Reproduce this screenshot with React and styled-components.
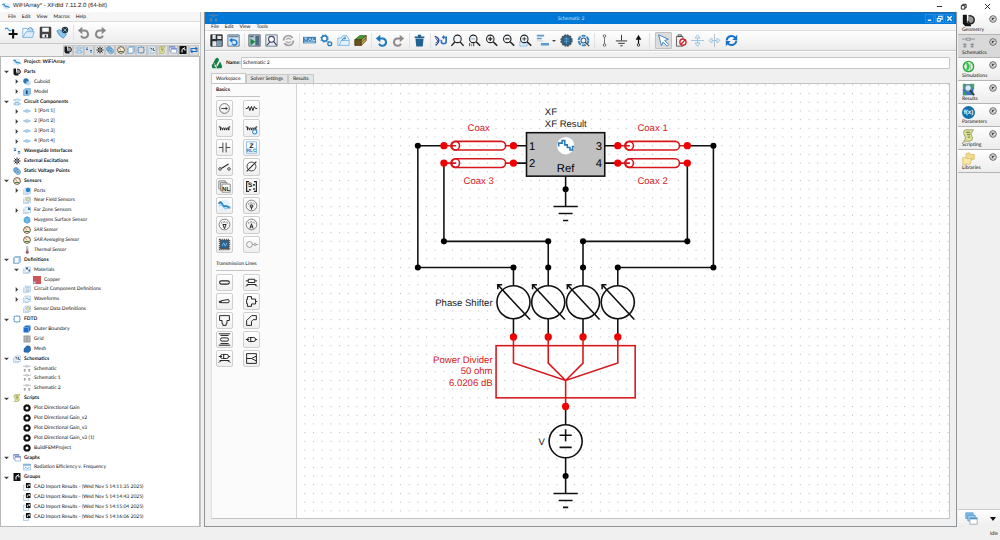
import React, { useState } from 'react';
import styled, { createGlobalStyle } from 'styled-components';

const GlobalStyle = createGlobalStyle`
  * {
    box-sizing: border-box;
  }
  body {
    margin: 0;
    background: #f0f0f0;
    color: #111;
    font-family: Lato, 'Liberation Sans', sans-serif;
    font-size: 5px;
    line-height: 8px;
    text-rendering: geometricPrecision;
  }
  button,
  input {
    font: inherit;
    color: inherit;
    text-rendering: inherit;
  }
`;

/* ---------- icons ---------- */

const blue = '#1b6fb5';
const sky = '#8fc1e8';
const dark = '#222';

const lens = (
  <g stroke={dark}>
    <circle cx="6.5" cy="6" r="4.6" fill="#eef5fa" strokeWidth="1.3" />
    <path d="M10 9.5l5 5" strokeWidth="2" />
  </g>
);

const page = (
  <path d="M4 2h11v11H4zM1 5v10h11" stroke="#8ab6da" fill="#eaf4fc" />
);

const gauge = (
  <g>
    <circle cx="8" cy="8" r="6.8" fill="#fff3d8" stroke="#4a3b25" strokeWidth="1.6" />
    <path d="M8 9L5 4.5" stroke="#b33" strokeWidth="1.3" />
    <path d="M4 11h8" stroke="#3d7a3a" strokeWidth="2" />
    <path d="M8 3v1M12 5l-1 1" stroke="#444" />
  </g>
);

const meter = (
  <g stroke="#666">
    <circle cx="8" cy="8" r="6.6" />
    <path d="M4 6.5Q8 3 12 6.5" strokeDasharray="1 1" strokeWidth="1.6" />
  </g>
);

const coil = 'M1 6h2v4q1.300-6 2.600 0q1.300-6 2.600 0q1.300-6 2.600 0q1.300-6 2.600 0V6H15';

const icons = {
  app: (
    <g>
      <circle cx="8" cy="8" r="7" fill="#e4f1fb" stroke="none" />
      <path d="M1 6q2-4 4 0t3 3 3 0 4 2" stroke="#2a86c8" strokeWidth="2.4" />
      <path d="M1 9q3-4 5 0t4 3 5-1" stroke="#7ab8e2" />
    </g>
  ),
  add: (
    <g>
      <path d="M0 4q2-3 4 0t4 1" stroke="#4a9bd4" strokeWidth="1.5" />
      <path d="M10 4v11.5M4.5 9.8h11" stroke="#111" strokeWidth="2.6" />
    </g>
  ),
  open: (
    <g stroke="#6aa9d8">
      <path d="M1 14V3h5l1 2h6v3" fill="#f4faff" />
      <path d="M1 14L5 7h10l-2 7z" fill="#dceefa" />
      <path d="M7 4q4-4 7 1" stroke={blue} />
    </g>
  ),
  save: (
    <g>
      <path d="M1.5 1.5h13v13h-13z" fill="#444" stroke="#222" />
      <path d="M4 2h8v5H4zM4 10h7v4H4z" fill="#fff" stroke="none" />
      <path d="M7 11h2v3H7z" fill="#333" stroke="none" />
    </g>
  ),
  wifi: (
    <g>
      <path d="M1 6q3-3 6 0t6 4l-4 5q-6-3-8-9z" fill="#8cc4ea" stroke="#4b95cd" />
      <circle cx="11" cy="5" r="4" fill="#23364a" stroke="none" />
      <path d="M9 3l4 4M13 3L9 7" stroke="#9cc" />
    </g>
  ),
  undo: (
    <g>
      <path d="M4.5 5.5H9a4.5 4.5 0 1 1-4 6.5" stroke="currentColor" strokeWidth="2.4" />
      <path d="M6.5 1v9L1 5.5z" fill="currentColor" stroke="none" />
    </g>
  ),
  redo: (
    <g>
      <path d="M11.5 5.5H7a4.5 4.5 0 1 0 4 6.5" stroke="currentColor" strokeWidth="2.4" />
      <path d="M9.5 1v9L15 5.5z" fill="currentColor" stroke="none" />
    </g>
  ),
  parts: (
    <g>
      <path d="M1 1h5v9l5 3v2H4l-3-3z" fill="#151515" stroke="none" />
      <path d="M8 2q7 0 7 5t-5 5l-3-3" fill="#999" stroke="#222" strokeWidth="1.8" />
    </g>
  ),
  circuit: (
    <g stroke="#7db5e0" strokeWidth="1.5">
      <rect x="4" y="2" width="8" height="4" rx="2" />
      <rect x="4" y="9" width="8" height="5" fill="#cfe5f6" />
      <path d="M0 4h4M12 4h4M0 12h4M12 12h4" />
    </g>
  ),
  port: (
    <g stroke="#6fa6d2">
      <rect x="4" y="5.5" width="8" height="5" rx="2" fill="#b9d7ee" />
      <path d="M0 8h4M12 8h4" strokeWidth="1.5" />
    </g>
  ),
  waveguide: (
    <g>
      <path d="M1 1h6v7H1zM9 8h6v7H9z" fill="#cfe4f4" stroke="none" />
      <path d="M4 2v6M2 6l2 2 2-2M12 8v6M10 10l2-2 2 2" stroke="#245e94" strokeWidth="1.5" />
    </g>
  ),
  excite: (
    <g stroke="#222" strokeWidth="2">
      <path d="M8 1v14M1 8h14M3 3l10 10M13 3L3 13" />
      <circle cx="8" cy="8" r="2" fill="#fff" strokeWidth="1" />
    </g>
  ),
  voltage: (
    <g stroke="#2a6eaa">
      <circle cx="6" cy="6" r="5" fill="#78b4df" />
      <circle cx="10" cy="10" r="5" fill="#9fcbea" />
      <path d="M7 8l6 4M8 12l4-5" />
    </g>
  ),
  gauge,
  sphere: (
    <g>
      {page}
      <circle cx="10" cy="6" r="4.5" fill="#2c82c4" stroke="none" />
      <path d="M5 9q5 4 10 0v4H5z" fill="#bcdcf3" stroke="none" />
    </g>
  ),
  near: (
    <g>
      {page}
      <circle cx="10" cy="7" r="3.5" fill="#efe0b0" stroke="#886" />
    </g>
  ),
  far: (
    <g>
      {page}
      <path d="M10 2a6 6 0 0 1 5 6h-5z" fill="#2c72b4" stroke="none" />
    </g>
  ),
  huygens: (
    <g>
      <path d="M8 1l6 3.5v7L8 15l-6-3.5v-7z" fill="#58aee0" stroke="#358cc4" />
      <path d="M2 5l6 3 6-3M8 8v7" stroke="#a8d8f4" />
    </g>
  ),
  thermal: (
    <g>
      <path d="M7 1h3v9H7z" fill="#dfe8f2" stroke="#89a" />
      <circle cx="8.5" cy="12.5" r="2.6" fill="#c44" stroke="#668" />
      <path d="M8.5 5v6" stroke="#b33" />
    </g>
  ),
  definitions: (
    <g>
      <path d="M4 1h11v11l-3 3H1V4z" fill="#a5c6e2" stroke="#6e93b3" />
      <path d="M4 4h7v9H4z" fill="#f4faff" stroke="none" />
    </g>
  ),
  materials: (
    <g>
      {page}
      <path d="M6 3h4v4H6zM11 7h3v4h-3z" fill="#3f5f80" stroke="none" />
    </g>
  ),
  copper: (
    <g>
      <path d="M0 0h16v16H0z" fill="#cd5557" stroke="none" />
      <circle cx="3" cy="13" r="2.5" fill="#b9c8e8" stroke="none" />
    </g>
  ),
  list: (
    <g>
      {page}
      <path d="M6 5h7M6 8h7M6 11h7" stroke="#7d9ab5" />
    </g>
  ),
  wave: (
    <g>
      {page}
      <path d="M6 8q2-5 4 0t4-1" stroke={blue} />
    </g>
  ),
  fdtd: (
    <path
      d="M5.5 2.5h-3v3M10.5 2.5h3v3M5.5 13.5h-3v-3M10.5 13.5h3v-3M8 0v4M8 12v4M0 8h4M12 8h4"
      stroke="#1f74b8"
      strokeWidth="1.6"
    />
  ),
  cube: (
    <g>
      <path d="M1 5l4-4h10v9l-4 5H1z" fill="#1e6fd0" stroke="none" />
      <path d="M1 5h10l4-4M11 5v10" stroke="#9ccaf6" />
    </g>
  ),
  grid: (
    <g>
      <path d="M1 1h14v14H1z" fill="#999" stroke="none" />
      <path d="M1 4.5h14M1 8h14M1 11.5h14M5 1v14M11 1v14" stroke="#c6c6c6" />
    </g>
  ),
  mesh: <path d="M2 14V8l5-6q8-2 8 4v5l-4 4z" fill="#2b70b4" stroke="#174f88" />,
  model: (
    <g>
      <path d="M1 4l4-3h10v11l-4 3H1z" fill="#86bfe8" stroke="#5b9bcb" />
      <path d="M6 5h3v7H6z" fill="#143e66" stroke="none" />
    </g>
  ),
  cuboid: (
    <g stroke="none">
      <circle cx="6" cy="6" r="5.5" fill="#2878b8" />
      <path d="M7 7h8v5l-3 3H7z" fill="#bcd9ee" />
    </g>
  ),
  schematics: (
    <g>
      {page}
      <path d="M5 5h3v4M11 4v5h3" stroke="#345" strokeWidth="1.5" />
    </g>
  ),
  schematic: (
    <g stroke="#858b90">
      <path d="M0 2.5h5M11 2.5h5M5.5 1.5h5V4h-5z" />
      <path d="M3.5 8v5M12.5 8v5M1.5 9h4M10.5 9h4M1.5 12h4M10.5 12h4" strokeWidth="1.4" />
    </g>
  ),
  script: (
    <g>
      <path d="M4 1h10l-3 5 2 5q0 4-4 4H2q3-2 2-5l-2-5q0-4 2-4z" fill="#dfe29a" stroke="#96984f" />
      <path d="M5 4h5M6 7h4M7 10h3" stroke="#55582c" />
    </g>
  ),
  gear: (
    <g>
      <circle cx="8" cy="8" r="5" stroke="#111" strokeWidth="4" />
      <circle cx="8" cy="8" r="7.2" stroke="#111" strokeDasharray="2 1.5" />
    </g>
  ),
  graphs: (
    <g stroke="#5a78c0">
      <path d="M1 1h11v9H1z" fill="#eaf0fb" />
      <path d="M4 5h11v9H4z" fill="#fff" />
      <path d="M1 2h11M4 6h11" strokeWidth="2.4" />
    </g>
  ),
  graph: (
    <g>
      <path d="M1 2h14v12H1z" fill="#f4faff" stroke="#6aa2d0" />
      <path d="M1 4h14" stroke="#3f8acb" strokeWidth="2" />
      <path d="M3 11q2-5 4-1t6-2" stroke={blue} />
    </g>
  ),
  groups: (
    <g>
      <path d="M1 0h14v16H1z" fill="#111" stroke="none" />
      <path d="M6 13V7l6-4M9 6h3v3" stroke="#fff" strokeWidth="2" />
    </g>
  ),
  group: (
    <g>
      <path d="M1 4v11h10V5z" fill="#eef5fb" stroke="#7ea9ce" />
      <path d="M6 0h9v10H6z" fill="#111" stroke="none" />
      <path d="M9 8V5l4-2v3" stroke="#fff" strokeWidth="1.5" />
    </g>
  ),
  refresh: (
    <g>
      <path d="M2 8a6 6 0 0 1 10.5-3.5M14 8a6 6 0 0 1-10.5 3.5" stroke="currentColor" strokeWidth="2.4" />
      <path d="M15 1v6.5H9zM1 15V8.5h6z" fill="currentColor" stroke="none" />
    </g>
  ),
  swap: (
    <g>
      <path d="M2 9V5h10M14 7v4H4" stroke="currentColor" strokeWidth="2.2" />
      <path d="M11 1l5 4-5 4zM5 7l-5 4 5 4z" fill="currentColor" stroke="none" />
    </g>
  ),
  saveAll: (
    <g>
      <path d="M1 1h14v14H1z" fill="#2c3033" stroke="#222" />
      <path d="M3 1h4v5H3zM9 2h5v4H9zM3 9h5v6H3z" fill="#dfe8ee" stroke="none" />
      <path d="M8.5 8h6v7h-6z" fill="#7b9db8" stroke="none" />
    </g>
  ),
  revert: (
    <g>
      <path d="M1 1h14v14H1z" fill="#d3e4f2" stroke="#536b80" />
      <path d="M2 2h12v2H2z" fill="#6d879a" stroke="none" />
      <path d="M6 7.5h3a3 3 0 1 1-2.5 4.500" stroke="#1978cf" strokeWidth="1.8" />
      <path d="M6.5 4.5v6.500L2.5 7.500z" fill="#1978cf" stroke="none" />
    </g>
  ),
  run: (
    <g>
      <path d="M1 1h14v14H1z" fill="#b7cddd" stroke="#556" />
      <path d="M2 2h5v2H2zM9 2h5v12H9z" fill="#4c6c83" stroke="none" />
      <path d="M3 5.5l6 4-6 4.500z" fill="#1d8a3c" stroke="none" />
    </g>
  ),
  preview: (
    <g>
      <path d="M1 1h14v14H1z" fill="#e6eef5" stroke="#5f6f7c" />
      <circle cx="8" cy="6.5" r="3.6" fill="#fff" stroke="#446" strokeWidth="1.3" />
      <path d="M10.5 9l4 5M6 10l-4 4" stroke="#446" strokeWidth="1.5" />
    </g>
  ),
  sync: (
    <g stroke="#a3a3a3">
      <circle cx="8" cy="8" r="6" strokeWidth="2.4" strokeDasharray="15 3.5" />
      <path d="M5 7q3-3 6 0M11 9q-3 3-6 0" strokeWidth="1.5" />
    </g>
  ),
  table: (
    <g>
      <path d="M0 3.5h16v8H0z" fill="#3d83b9" stroke="none" />
      <path d="M1.5 5h3l-2 3M6.5 8.5l2-3 2 3M12 5v3h3M1.5 10h13" stroke="#d9edfb" />
    </g>
  ),
  gears: (
    <g stroke="#1b74bd">
      <circle cx="5.5" cy="5.5" r="3.4" strokeWidth="1.7" />
      <circle cx="5.5" cy="5.5" r="4.8" strokeDasharray="1.5 2.3" />
      <circle cx="12" cy="12" r="2.4" strokeWidth="1.5" />
      <path d="M9 9l2 1" />
    </g>
  ),
  openCircuit: (
    <g stroke="#6fb0de">
      <path d="M1 14V5h4l2-3h5l3 5v7z" fill="#e4f2fc" />
      <path d="M3 14L5 8h10" />
      <path d="M6 8q2-5 5-2M10 3v3H7" stroke="#2b80c0" />
    </g>
  ),
  library: (
    <g>
      <path d="M1 7l6-5h8l-6 5z" fill="#4a9a32" stroke="#2f5f22" />
      <path d="M1 7h8v7H1z" fill="#75501f" stroke="#4b3213" />
      <path d="M9 7l6-5v6l-6 6z" fill="#cfa052" stroke="#5b3d18" />
      <path d="M1 10h8l6-5" stroke="#2f6f22" />
    </g>
  ),
  trash: (
    <g stroke="none" fill="#1f6190">
      <path d="M2 3h12v2H2zM6 1h4v2H6zM3 5.5h10l-1 10H4z" />
    </g>
  ),
  rotate: (
    <g stroke="#223c88" strokeWidth="1.6">
      <path d="M1 3q5 2 5 5t-4 6" />
      <path d="M2 5l3 4-3 2" strokeWidth="1" />
      <path d="M9 7v2a3 3 0 0 0 6 0V4h-3" stroke="#2f72c5" strokeWidth="2" />
      <path d="M12.5 1v6L9.500 4z" fill="#2f72c5" stroke="none" />
    </g>
  ),
  zoom: (
    <g>
      <circle cx="8" cy="6" r="4.6" fill="#eef5fa" stroke={dark} strokeWidth="1.3" />
      <path d="M5 9.5l-4.500 5M11 9.5l4.500 5" stroke={dark} strokeWidth="1.6" />
    </g>
  ),
  zoomFit: (
    <g>
      {lens}
      <path d="M2 11v4M4.5 12v1M4.5 14v1M7 11v4" stroke={dark} />
      <path d="M4 6h5" stroke="#89a" />
    </g>
  ),
  zoomIn: (
    <g>
      {lens}
      <path d="M4 6h5M6.5 3.5v5" stroke={dark} strokeWidth="1.4" />
    </g>
  ),
  zoomOut: (
    <g>
      {lens}
      <path d="M4 6h5" stroke={dark} strokeWidth="1.4" />
    </g>
  ),
  zoomArea: (
    <g>
      <path d="M1 9h9v6H1z" fill="#d7e9f7" stroke={sky} />
      {lens}
      <path d="M4 6h5M6.5 3.5v5" stroke={dark} />
    </g>
  ),
  align: (
    <g stroke="none" fill="#5b9bd0">
      <path d="M1 1h9v2H1zM1 4.5h6v2H1zM6 11h10v3H6z" />
      <path d="M1 8h8v1H1z" fill="#b9cfe0" />
    </g>
  ),
  chip: (
    <g>
      <circle cx="8" cy="8" r="6.4" fill="#2a6390" stroke="#4d5358" strokeWidth="2.4" strokeDasharray="2.5 .8" />
      <path d="M5 6h6M5 9h6M8 4v8" stroke="#5fa3d2" />
    </g>
  ),
  gearSearch: (
    <g>
      <circle cx="8" cy="8" r="6" stroke="#3a83bf" strokeWidth="2.4" strokeDasharray="5 1.3" />
      <circle cx="8" cy="8" r="3" stroke="#245f92" strokeWidth="1.3" />
      <path d="M10 10l5 5" stroke="#444" strokeWidth="1.5" />
    </g>
  ),
  wire: (
    <g stroke="#555">
      <circle cx="8" cy="2.5" r="1.6" />
      <circle cx="8" cy="13.5" r="1.6" />
      <path d="M8 4v8" />
    </g>
  ),
  ground: <path d="M8 1v7M1 8.5h14M4 11.5h8M6.5 14.5h3" stroke="#333" strokeWidth="1.2" />,
  probe: (
    <g>
      <path d="M8 1l3.5 6h-7z" fill="#111" stroke="none" />
      <path d="M8 6v8" stroke="#111" strokeWidth="1.5" />
      <circle cx="8" cy="13.5" r="1.5" fill="#fff" stroke="#111" />
    </g>
  ),
  cursor: (
    <path d="M2 1l12 5.5L9.5 8l5 5-2 2-5-5-2 4.500z" fill="#fff" stroke="#3a86cc" strokeWidth="1.2" />
  ),
  disable: (
    <g>
      <path d="M3 3h8v12H3zM5 1h4v2H5z" fill="#eee" stroke="#444" />
      <circle cx="11" cy="10" r="3.8" stroke="#cf2c34" fill="#fff" strokeWidth="1.7" />
      <path d="M13.5 7.5l-5 5" stroke="#cf2c34" strokeWidth="1.7" />
    </g>
  ),
  flipV: (
    <g stroke="#8cbde2">
      <path d="M0 8h16" />
      <path d="M5 5l3-4 3 4zM5 11l3 4 3-4zM8 5v6" />
    </g>
  ),
  flipH: (
    <g stroke="#8cbde2">
      <path d="M8 0v16" stroke="#a4b4c0" />
      <path d="M5 5L1 8l4 3zM11 5l4 3-4 3zM5 8h6" />
    </g>
  ),
  check: (
    <g>
      <path d="M2 15Q0 13 3 8q3-7 5-7t5 7q3 5 1 7z" fill="#178248" stroke="none" />
      <path d="M4 9l3 4 5-9" stroke="#fff" strokeWidth="2" />
      <path d="M1 11q6-3 8 4" stroke="#0c5530" />
    </g>
  ),
  simulation: (
    <g>
      <circle cx="8" cy="8" r="6.3" fill="#d9f6d9" stroke="#35a846" strokeWidth="1.8" />
      <path d="M4 3q4 5 0 10h3q5-5 0-10z" fill="#35c64c" stroke="none" />
      <path d="M10.5 4v8" stroke="#bbb" strokeWidth="1.5" />
    </g>
  ),
  results: (
    <g>
      <path d="M1 1h4v6H1zM10 1h5v7h-5z" fill="#4aa56a" stroke="none" />
      <path d="M1 7h13v8H1z" fill="#3b73c0" stroke="none" />
      <path d="M2 9l4 6H1z" fill="#36a253" stroke="none" />
      <circle cx="7.5" cy="6" r="4" fill="#d6eafa" stroke="#567f9d" strokeWidth="1.5" />
      <path d="M10 9l5 6" stroke="#333" strokeWidth="2" />
    </g>
  ),
  folders: (
    <g fill="#f5dc8c" stroke="#d8bb66">
      <path d="M5 2l4-1 1 2h5v6H5z" />
      <path d="M1 7h4l1 1h6l-2 7H1z" fill="#fae8a8" />
    </g>
  ),
  windows: (
    <g stroke="#5a9ccc">
      <path d="M1 1h9v7H1z" fill="#7fbbe5" />
      <path d="M3.5 4h9v7h-9z" fill="#9dccec" />
      <path d="M6 7h9v8H6z" fill="#fff" stroke="#8fa6b8" />
      <path d="M6 8h9" stroke="#4993cb" strokeWidth="2" />
    </g>
  ),

  // palette: basics
  source: (
    <g stroke="#555">
      <circle cx="8" cy="8" r="6" />
      <path d="M4 8h8M10 6v4" stroke="#222" />
    </g>
  ),
  resistor: <path d="M1 8h2l1.3-2.5 1.8 5 1.8-5 1.8 5 1.8-5L13 8h2" stroke="#222" strokeWidth="1.2" />,
  inductor: <path d={coil} stroke="#222" strokeWidth="1.2" />,
  mutual: (
    <g>
      <path d={coil} stroke="#222" strokeWidth="1.2" />
      <circle cx="12" cy="12" r="2.6" fill="#fff" stroke="#3b8fd0" strokeWidth="1.3" />
    </g>
  ),
  capacitor: <path d="M1 8h5M10 8h5M6 2v12M10 2v12" stroke="#444" strokeWidth="1.2" />,
  rlc: (
    <g>
      <rect x="2" y="1" width="12" height="14" fill="#f3f9fe" stroke="#7db4de" />
      <text x="8" y="8" textAnchor="middle" fontSize="8" fill="#111">Z</text>
      <text x="8" y="14" textAnchor="middle" fontSize="6" fill="#2379bd">RLC</text>
    </g>
  ),
  netlist: (
    <g stroke="#777">
      <path d="M1 1h8v10H1z" fill="#eee" />
      <path d="M3 3h8v10H3z" fill="#eee" />
      <path d="M5 5h10v10H5z" fill="#fff" />
      <text x="10" y="13" textAnchor="middle" fontSize="7" fill="#111" stroke="none">NL</text>
    </g>
  ),
  sparam: (
    <g>
      <path d="M5 2H2v12h3M11 2h3v12h-3" stroke="#222" strokeWidth="1.4" />
      <text x="6.5" y="9" textAnchor="middle" fontSize="8" fill="#111">S</text>
      <path d="M10 5h2v2h-2zM10 10h2v2h-2zM5 11h2v2H5z" fill="#222" stroke="none" />
    </g>
  ),
  switch: (
    <g stroke="#222">
      <circle cx="2.5" cy="11" r="1.6" />
      <circle cx="13.5" cy="11" r="1.6" />
      <path d="M4 10.5L13 5" strokeWidth="1.3" />
    </g>
  ),
  phase: (
    <g stroke="#222">
      <circle cx="8" cy="8" r="5.5" />
      <path d="M2 14L14 2" strokeWidth="1.3" />
    </g>
  ),
  chipBlue: (
    <g>
      <path d="M2 2h12v12H2z" stroke="#555" strokeWidth="2" strokeDasharray="1.5 1" />
      <path d="M3 3h10v10H3z" fill="#1f659b" stroke="#444" />
      <path d="M5 10l2-4 2 4 2-4" stroke="#8dc6ee" />
    </g>
  ),
  meterV: (
    <g>
      {meter}
      <path d="M6 8l2 5 2-5z" stroke="#222" strokeWidth="1.2" />
    </g>
  ),
  meterA: (
    <g>
      {meter}
      <path d="M6 13l2-6 2 6M7 11h2" stroke="#222" strokeWidth="1.2" />
    </g>
  ),
  meterP: (
    <g>
      {meter}
      <path d="M8 13v-3M6.5 7.5h3V10h-3z" stroke="#222" strokeWidth="1.2" />
    </g>
  ),
  node: (
    <g stroke="#888">
      <circle cx="5.5" cy="8" r="3.6" />
      <circle cx="12.5" cy="8" r="1.3" />
      <path d="M9 8h2M14 8h2" />
    </g>
  ),

  // palette: transmission lines
  line: <rect x="2" y="6" width="12" height="4" rx="2" stroke="#222" strokeWidth="1.3" />,
  microstrip: (
    <path d="M4 4h8v4H4zM1 6h3M12 6h3M2 10.5h12M1 13q1-2 3-2M15 13q-1-2-3-2" stroke="#222" strokeWidth="1.2" />
  ),
  taper: (
    <g stroke="#222" strokeWidth="1.200">
      <path d="M4 7l9-1.5q1.5 2 0 4H4z" />
      <circle cx="2.5" cy="8.500" r="1" fill="#222" />
    </g>
  ),
  step: <path d="M3 2h5v3h5v6H8v3H3v-3.500H2v-5h1zM13 8h2" stroke="#222" strokeWidth="1.2" />,
  tee: <path d="M2 2h12v6h-3v4h-1v2H6v-2H5V8H2z" stroke="#222" strokeWidth="1.2" />,
  bend: <path d="M2 14V8l6-6h6v5h-4l-2 2v5z" stroke="#222" strokeWidth="1.2" />,
  stripline: (
    <g stroke="#222" strokeWidth="1.2">
      <path d="M1 1h14M3 3h10M3 13h10M1 15h14" />
      <rect x="3" y="6" width="10" height="4" rx="2" />
    </g>
  ),
  coax: (
    <g stroke="#222" strokeWidth="1.2">
      <rect x="3" y="5.500" width="10" height="5" rx="2.500" />
      <path d="M7 5.500v5M1 8h4M13 8h2" />
    </g>
  ),
  coaxGround: (
    <g stroke="#222" strokeWidth="1.2">
      <rect x="3" y="3" width="10" height="5" rx="2.500" />
      <path d="M7 3v5M1 5.500h4M13 5.500h2M2 10.500h12M1 13q1-2 3-2M15 13q-1-2-3-2" />
    </g>
  ),
  divider: <path d="M2 2h12v12H2zM2 8h6l6-3M8 8l6 3" stroke="#222" strokeWidth="1.2" />,
};

const Svg = styled.svg`
  display: block;
  flex: none;
  width: ${p => p.$size}px;
  height: ${p => p.$size}px;
  color: ${p => p.$color || 'inherit'};
  fill: none;
  text {
    font-family: 'Liberation Sans', sans-serif;
    font-weight: bold;
  }
`;

const Icon = ({ name, size = 13, color }) => (
  <Svg viewBox="0 0 16 16" $size={size} $color={color} aria-hidden="true">
    {icons[name]}
  </Svg>
);

/* ---------- shell ---------- */

const Page = styled.div`
  display: flex;
  flex-direction: column;
  min-height: 100vh;
`;

const TitleBar = styled.header`
  display: flex;
  align-items: center;
  height: 12px;
  padding: 0 2px;
  gap: 3px;
  background: #fff;
`;

const AppTitle = styled.h1`
  flex: 1;
  margin: 0;
  font-family: 'Liberation Sans', sans-serif;
  font-size: 6px;
  font-weight: normal;
`;

const Caption = styled.button`
  display: flex;
  justify-content: center;
  align-items: center;
  width: 21px;
  height: 12px;
  padding: 0;
  border: 0;
  background: none;
`;

const Body = styled.div`
  flex: 1;
  display: flex;
  background: #f0f0f0;
`;

const StatusBar = styled.footer`
  height: 13px;
  padding: 3px 2px 0;
  text-align: right;
`;

/* ---------- shared bars ---------- */

const MenuBar = styled.nav`
  display: flex;
  align-items: center;
  height: ${p => p.$height}px;
  padding-left: ${p => p.$left}px;
  gap: 6px;
  border-bottom: 1px solid #ddd;
  background: #f6f6f6;
`;

const MenuItem = styled.button`
  padding: 0;
  border: 0;
  background: none;
  line-height: 6px;
`;

const ToolBar = styled.div`
  display: flex;
  align-items: center;
  height: ${p => p.$height}px;
  padding-left: ${p => p.$left}px;
  border-bottom: 1px solid #c8c8c8;
  background: linear-gradient(#fff, #ececec);
`;

const Tool = styled.button`
  display: flex;
  align-items: center;
  justify-content: center;
  gap: 3px;
  flex: none;
  width: ${p => p.$width || 17}px;
  height: 17px;
  padding: 0;
  border: 1px solid ${p => (p.$active ? '#c0c0c0' : 'transparent')};
  border-radius: 1px;
  background: ${p => (p.$active ? '#dcdcdc' : 'none')};
`;

const Divider = styled.span`
  flex: none;
  width: 1px;
  height: 15px;
  margin: 0 ${p => p.$space || 1}px 0 2px;
  background: #e2e2e2;
`;

const Caret = styled.span`
  border: 2px solid transparent;
  border-top: 2px solid #444;
  border-bottom: 0;
`;

/* ---------- project tree ---------- */

const Sidebar = styled.aside`
  display: flex;
  flex-direction: column;
  width: 201px;
  border-right: 1px solid #c4c4c4;
`;

const FilterBar = styled.div`
  display: flex;
  justify-content: flex-end;
  align-items: center;
  height: 12px;
  padding-right: 1px;
`;

const Filter = styled.button`
  display: flex;
  justify-content: center;
  align-items: center;
  height: 11px;
  padding: 0;
  border: 1px solid #c6c6c6;
  background: #dedede;
`;

const FilterGroup = styled.div`
  display: grid;
  grid-template-columns: repeat(13, 1fr);
  width: 136px;
`;

const TreeList = styled.ul`
  flex: 1;
  display: flex;
  flex-direction: column;
  margin: 0;
  padding: 0 0 4px;
  list-style: none;
  border: 1px solid #b8b8b8;
  background: #fff;
`;

const TreeRow = styled.li`
  flex: 1;
  display: flex;
  align-items: center;
  padding-left: ${p => 2 + p.$level * 10}px;
  font-weight: ${p => (p.$bold ? 'bold' : 'normal')};
  font-style: ${p => (p.$italic ? 'italic' : 'normal')};
  white-space: nowrap;
`;

const Expander = styled.button`
  display: flex;
  justify-content: center;
  align-items: center;
  width: 6px;
  height: 6px;
  margin-right: 4px;
  padding: 0;
  border: 0;
  background: none;
`;

const Spacer = styled.span`
  width: 10px;
`;

const Label = styled.span`
  margin-left: 3px;
`;

const tree = [
  { level: 0, icon: 'app', text: 'Project: WiFiArray', bold: true },
  { level: 0, icon: 'parts', text: 'Parts', bold: true, open: true },
  { level: 1, icon: 'cuboid', text: 'Cuboid', open: false },
  { level: 1, icon: 'model', text: 'Model', open: false },
  { level: 0, icon: 'circuit', text: 'Circuit Components', bold: true, open: true },
  { level: 1, icon: 'port', text: '1 [Port 1]', open: false },
  { level: 1, icon: 'port', text: '2 [Port 2]', open: false },
  { level: 1, icon: 'port', text: '3 [Port 3]', open: false },
  { level: 1, icon: 'port', text: '4 [Port 4]', open: false },
  { level: 0, icon: 'waveguide', text: 'Waveguide Interfaces', bold: true },
  { level: 0, icon: 'excite', text: 'External Excitations', bold: true },
  { level: 0, icon: 'voltage', text: 'Static Voltage Points', bold: true },
  { level: 0, icon: 'gauge', text: 'Sensors', bold: true, open: true },
  { level: 1, icon: 'sphere', text: 'Ports', open: false },
  { level: 1, icon: 'near', text: 'Near Field Sensors' },
  { level: 1, icon: 'far', text: 'Far Zone Sensors', open: false },
  { level: 1, icon: 'huygens', text: 'Huygens Surface Sensor' },
  { level: 1, icon: 'gauge', text: 'SAR Sensor', italic: true },
  { level: 1, icon: 'gauge', text: 'SAR Averaging Sensor', italic: true },
  { level: 1, icon: 'thermal', text: 'Thermal Sensor', italic: true },
  { level: 0, icon: 'definitions', text: 'Definitions', bold: true, open: true },
  { level: 1, icon: 'materials', text: 'Materials', open: true },
  { level: 2, icon: 'copper', text: 'Copper' },
  { level: 1, icon: 'list', text: 'Circuit Component Definitions', open: false },
  { level: 1, icon: 'wave', text: 'Waveforms', open: false },
  { level: 1, icon: 'near', text: 'Sensor Data Definitions' },
  { level: 0, icon: 'fdtd', text: 'FDTD', bold: true, open: true },
  { level: 1, icon: 'cube', text: 'Outer Boundary' },
  { level: 1, icon: 'grid', text: 'Grid' },
  { level: 1, icon: 'mesh', text: 'Mesh' },
  { level: 0, icon: 'schematics', text: 'Schematics', bold: true, open: true },
  { level: 1, icon: 'schematic', text: 'Schematic' },
  { level: 1, icon: 'schematic', text: 'Schematic 1' },
  { level: 1, icon: 'schematic', text: 'Schematic 2' },
  { level: 0, icon: 'script', text: 'Scripts', bold: true, open: true },
  { level: 1, icon: 'gear', text: 'Plot Directional Gain' },
  { level: 1, icon: 'gear', text: 'Plot Directional Gain_v2' },
  { level: 1, icon: 'gear', text: 'Plot Directional Gain_v3' },
  { level: 1, icon: 'gear', text: 'Plot Directional Gain_v3 (1)' },
  { level: 1, icon: 'gear', text: 'BuildFEMProject' },
  { level: 0, icon: 'graphs', text: 'Graphs', bold: true, open: true },
  { level: 1, icon: 'graph', text: 'Radiation Efficiency v. Frequency' },
  { level: 0, icon: 'groups', text: 'Groups', bold: true, open: true },
  { level: 1, icon: 'group', text: 'CAD Import Results - (Wed Nov 5 14:11:35 2025)' },
  { level: 1, icon: 'group', text: 'CAD Import Results - (Wed Nov 5 14:14:43 2025)' },
  { level: 1, icon: 'group', text: 'CAD Import Results - (Wed Nov 5 14:15:04 2025)' },
  { level: 1, icon: 'group', text: 'CAD Import Results - (Wed Nov 5 14:16:06 2025)' },
];

const filters = [
  'parts', 'circuit', 'waveguide', 'excite', 'voltage', 'gauge', 'definitions',
  'fdtd', 'schematics', 'script', 'graphs', 'groups', 'swap',
];

const Chevron = ({ open }) => (
  <Svg viewBox="0 0 6 6" $size={5} aria-hidden="true">
    <path d={open ? 'M0 2l3 3 3-3z' : 'M2 0l3 3-3 3z'} fill="#444" />
  </Svg>
);

const ProjectTree = () => (
  <Sidebar>
    <MenuBar $height={10} $left={8}>
      {['File', 'Edit', 'View', 'Macros', 'Help'].map(m => (
        <MenuItem key={m}>{m}</MenuItem>
      ))}
    </MenuBar>
    <ToolBar $height={22} $left={3}>
      {['add', 'open', 'save', 'wifi'].map(name => (
        <Tool key={name} aria-label={name}>
          <Icon name={name} />
        </Tool>
      ))}
      <Divider $space={1} />
      <Tool aria-label="Undo">
        <Icon name="undo" color="#888" />
      </Tool>
      <Tool aria-label="Redo">
        <Icon name="redo" color="#888" />
      </Tool>
    </ToolBar>
    <FilterBar>
      <FilterGroup>
        {filters.map(name => (
          <Filter key={name} aria-label={name}>
            <Icon name={name} size={8} color="#1b6fc8" />
          </Filter>
        ))}
      </FilterGroup>
    </FilterBar>
    <TreeList>
      {tree.map((row, i) => (
        <TreeRow key={i} $level={row.level} $bold={row.bold} $italic={row.italic}>
          {row.open === undefined ? (
            <Spacer />
          ) : (
            <Expander aria-label={row.text} aria-expanded={row.open}>
              <Chevron open={row.open} />
            </Expander>
          )}
          <Icon name={row.icon} size={8} />
          <Label>{row.text}</Label>
        </TreeRow>
      ))}
    </TreeList>
  </Sidebar>
);

/* ---------- schematic window ---------- */

const Window = styled.main`
  flex: 1;
  display: flex;
  flex-direction: column;
  min-width: 0;
  margin-left: 3px;
  border: 1px solid #8f9498;
  border-top: 0;
`;

const WindowTitle = styled.div`
  display: flex;
  align-items: center;
  height: 12px;
  padding: 0 2px 0 4px;
  border-top: 1px solid #1a69ad;
  background: #0078d7;
  color: #cfe4f6;
`;

const WindowName = styled.h2`
  flex: 1;
  margin: 0;
  text-align: center;
  font-size: 5px;
  font-weight: normal;
`;

const WindowButton = styled.button`
  display: flex;
  justify-content: center;
  align-items: center;
  width: 9px;
  height: 9px;
  margin-left: 1px;
  padding: 0;
  border: 1px solid #2a8ade;
  background: none;
  color: #fff;
`;

const NameRow = styled.div`
  display: flex;
  align-items: center;
  gap: 3px;
  height: 22px;
  padding: 0 6px;
  border-top: 1px solid #fff;
`;

const NameLabel = styled.label`
  width: 12px;
  font-weight: bold;
  white-space: nowrap;
`;

const NameInput = styled.input`
  flex: 1;
  height: 12px;
  padding: 0 1px;
  border: 1px solid #c6c6c6;
  border-radius: 1px;
  background: #fff;
`;

const Tabs = styled.div`
  display: flex;
  align-items: flex-end;
  height: 10px;
  padding-left: 6px;
`;

const Tab = styled.button`
  height: ${p => (p.$active ? 10 : 9)}px;
  padding: 0 4px;
  border: 1px solid #c9c9c9;
  border-bottom: 0;
  background: ${p => (p.$active ? '#fcfcfc' : '#e4e4e4')};
`;

const Workspace = styled.div`
  flex: 1;
  display: flex;
  margin: 0 6px 7px;
  border: 1px solid #c4c4c4;
  border-left-color: #e0e0e0;
`;

const Palette = styled.div`
  flex: none;
  width: 85px;
  padding: 3px 4px;
  border-right: 1px solid #d4d4d4;
  background: #fbfbfb;
`;

const PaletteTitle = styled.h3`
  width: 44px;
  height: 10px;
  margin: 0 0 3px;
  border-bottom: 1px solid #c4c4c4;
  font-size: 5px;
  line-height: 7px;
  font-weight: ${p => (p.$bold ? 'bold' : 'normal')};
  white-space: nowrap;
`;

const PaletteGrid = styled.div`
  display: grid;
  grid-template-columns: 17px 17px;
  gap: 2px 10px;
  height: ${p => p.$height}px;
  margin-bottom: 8px;
`;

const PaletteButton = styled.button`
  display: flex;
  justify-content: center;
  align-items: center;
  min-height: 0;
  padding: 0;
  border: 1px solid #cfcfcf;
  border-radius: 2px;
  background: linear-gradient(#fff, #efefef);
`;

const tools = [
  'saveAll', 'revert', '|', 'run', 'preview', 'sync', '|',
  'table', 'gears', 'openCircuit', 'library', '|', 'undo', 'redo', '|',
  'trash', '|', 'rotate', 'zoom', 'zoomFit', 'zoomIn', 'zoomOut', 'zoomArea',
  'align', 'chip', 'gearSearch', '|', 'wire', 'ground', 'probe', '||',
  'cursor', 'disable', 'flipV', 'flipH', 'refresh',
];

const toolColors = { undo: '#1a78bd', redo: '#8d8d8d', refresh: '#1670cc' };

const basics = [
  'source', 'resistor', 'inductor', 'mutual', 'capacitor', 'rlc', 'switch', 'phase',
  'netlist', 'sparam', 'app', 'meterP', 'meterV', 'meterA', 'chipBlue', 'node',
];

const lines = [
  'line', 'microstrip', 'taper', 'step', 'tee', 'bend', 'stripline', 'coax',
  'coaxGround', 'divider',
];

const Parts = ({ title, bold, names, height }) => (
  <>
    <PaletteTitle $bold={bold}>{title}</PaletteTitle>
    <PaletteGrid $height={height}>
      {names.map(name => (
        <PaletteButton key={name} aria-label={name}>
          <Icon name={name} size={13} />
        </PaletteButton>
      ))}
    </PaletteGrid>
  </>
);

/* ---------- circuit drawing, 10 units per grid step ---------- */

const Canvas = styled.div`
  flex: 1;
  position: relative;
  min-width: 0;
  background: #fff;
`;

// out of flow so that the drawing never stretches the window
const Drawing = styled.svg`
  position: absolute;
  inset: 0;
  width: 100%;
  height: 100%;
  fill: none;
  stroke: #111;
  stroke-width: 1.8;
  text {
    stroke: none;
    fill: #222;
    font-family: 'Liberation Sans', sans-serif;
    font-size: 11px;
  }
  .red {
    stroke: #d8171c;
  }
  text.red {
    stroke: none;
    fill: #d8171c;
  }
  text.pin {
    font-size: 13px;
    fill: #000;
  }
`;

const Dot = ({ x, y, red }) => (
  <circle cx={x} cy={y} r={red ? 4.2 : 3.5} fill={red ? '#f00000' : '#000'} stroke="none" />
);

const Coax = ({ x, y }) => (
  <g className="red">
    <path d={`M${x} ${y}h14M${x + 71} ${y}h9`} />
    <rect x={x + 9} y={y - 5} width="62" height="10" rx="5" />
    <circle cx={x + 13} cy={y} r="5" />
    <Dot x={x} y={y} red />
    <Dot x={x + 80} y={y} red />
  </g>
);

const Ground = ({ x, y }) => (
  <path d={`M${x} ${y}v20M${x - 14} ${y + 20}h28M${x - 8} ${y + 28}h16M${x - 3} ${y + 36}h6`} />
);

const Shifter = ({ x, y }) => (
  <g>
    <path d={`M${x} ${y - 40}v21M${x} ${y + 19}v21`} />
    <circle cx={x} cy={y} r="19" />
    <path d={`M${x - 18} ${y - 20}L${x + 19} ${y + 20}M${x - 18} ${y - 15}v-5h5`} />
    <Dot x={x} y={y - 40} />
    <Dot x={x} y={y + 40} red />
  </g>
);

const Circuit = () => (
  <Drawing viewBox="-309 -71 750 501" preserveAspectRatio="xMinYMin slice">
    <defs>
      <pattern id="dots" x="-5" y="-5" width="10" height="10" patternUnits="userSpaceOnUse">
        <rect x="4.4" y="4.4" width="1.2" height="1.2" fill="#b8b8b8" stroke="none" />
      </pattern>
    </defs>
    <rect x="-309" y="-71" width="100%" height="100%" fill="url(#dots)" stroke="none" />

    <path d="M-140 0H-170V140H-60M-140 20V110H-20V140" />
    <path d="M140 0H170V140H60M140 20V110H20V140" />
    <path d="M-60 0h15M-60 20h15M45 0h15M45 20h15" />
    <Coax x={-140} y={0} />
    <Coax x={-140} y={20} />
    <Coax x={60} y={0} />
    <Coax x={60} y={20} />

    <rect x="-45" y="-15" width="90" height="50" fill="#c0c0c0" />
    <circle cx="0" cy="0" r="10" fill="#fff" stroke="none" />
    <path d="M-8 1v-4h4v-3h3v5h3v3h3v3h3v-4h2" stroke="#2878b8" />
    <text className="pin" x="-42" y="5">1</text>
    <text className="pin" x="-42" y="25">2</text>
    <text className="pin" x="42" y="5" textAnchor="end">3</text>
    <text className="pin" x="42" y="25" textAnchor="end">4</text>
    <text className="pin" x="0" y="30" textAnchor="middle">Ref</text>
    <text x="-24" y="-35">XF</text>
    <text x="-24" y="-22">XF Result</text>

    <text className="red" x="-100" y="-17" textAnchor="middle">Coax</text>
    <text className="red" x="-100" y="44" textAnchor="middle">Coax 3</text>
    <text className="red" x="100" y="-17" textAnchor="middle">Coax 1</text>
    <text className="red" x="100" y="44" textAnchor="middle">Coax 2</text>

    <path d="M0 35v15" />
    <Dot x={0} y={50} />
    <Ground x={0} y={50} />

    {[-170, 170].map(x => (
      <React.Fragment key={x}>
        <Dot x={x} y={0} />
        <Dot x={x} y={140} />
      </React.Fragment>
    ))}
    {[-140, -20, 20, 140].map(x => (
      <Dot key={x} x={x} y={110} />
    ))}
    {[-60, -20, 20, 60].map(x => (
      <Shifter key={x} x={x} y={180} />
    ))}
    <text x="-84" y="184" textAnchor="end">Phase Shifter</text>

    <g className="red">
      <rect x="-80" y="230" width="160" height="60" />
      <path d="M-60 220v30L0 270L60 250V220M-20 220v30L0 270L20 250V220M0 270v30" />
    </g>
    <text className="red" x="-84" y="250" textAnchor="end">Power Divider</text>
    <text className="red" x="-84" y="263" textAnchor="end">50 ohm</text>
    <text className="red" x="-84" y="276" textAnchor="end">6.0206 dB</text>

    <path d="M0 300v21M0 359v21M0 326v14M-7 333h14M-7 347h14" />
    <circle cx="0" cy="340" r="19" />
    <text x="-24" y="344" textAnchor="end">V</text>
    <Dot x={0} y={300} red />
    <Dot x={0} y={380} />
    <Ground x={0} y={380} />
  </Drawing>
);

const SchematicWindow = () => {
  const [name, setName] = useState('Schematic 2');
  const [tab, setTab] = useState('Workspace');
  return (
    <Window>
      <WindowTitle>
        <Icon name="schematic" size={9} />
        <WindowName>Schematic 2</WindowName>
        <WindowButton aria-label="Minimize">
          <Svg viewBox="0 0 8 8" $size={7}>
            <path d="M2 6h4" stroke="#fff" strokeWidth="1.5" />
          </Svg>
        </WindowButton>
        <WindowButton aria-label="Restore">
          <Svg viewBox="0 0 8 8" $size={7}>
            <path d="M1.5 4h3.5v3h-3.5zM3 3V1.5h4V5H6" stroke="#fff" strokeWidth="1.2" />
          </Svg>
        </WindowButton>
        <WindowButton aria-label="Close">
          <Svg viewBox="0 0 8 8" $size={7}>
            <path d="M1.5 1.5l5 5M6.5 1.5l-5 5" stroke="#fff" strokeWidth="1.5" />
          </Svg>
        </WindowButton>
      </WindowTitle>
      <MenuBar $height={7} $left={6}>
        {['File', 'Edit', 'View', 'Tools'].map(m => (
          <MenuItem key={m}>{m}</MenuItem>
        ))}
      </MenuBar>
      <ToolBar $height={20} $left={3}>
        {tools.map((t, i) =>
          t[0] === '|' ? (
            <Divider key={i} $space={t === '||' ? 5 : 1} />
          ) : (
            <Tool key={i} aria-label={t} $active={t === 'cursor'} $width={t === 'align' ? 24 : 17}>
              <Icon name={t} color={toolColors[t]} size={13} />
              {t === 'align' && <Caret />}
            </Tool>
          )
        )}
      </ToolBar>
      <NameRow>
        <Icon name="check" size={12} />
        <NameLabel htmlFor="schematic-name">Name:</NameLabel>
        <NameInput id="schematic-name" value={name} onChange={e => setName(e.target.value)} />
      </NameRow>
      <Tabs>
        {['Workspace', 'Solver Settings', 'Results'].map(t => (
          <Tab key={t} $active={t === tab} onClick={() => setTab(t)}>
            {t}
          </Tab>
        ))}
      </Tabs>
      <Workspace>
        <Palette>
          <Parts title="Basics" bold names={basics} height={153} />
          <Parts title="Transmission Lines" names={lines} height={93} />
        </Palette>
        <Canvas>
          <Circuit />
        </Canvas>
      </Workspace>
    </Window>
  );
};

/* ---------- window list on the right ---------- */

const Dock = styled.aside`
  display: flex;
  flex-direction: column;
  width: 43px;
  padding-left: 1px;
`;

const DockItem = styled.div`
  display: flex;
  justify-content: space-between;
  height: 23px;
  border-bottom: 1px solid #b4b4b4;
  background: ${p => (p.$active ? '#d9d9d9' : 'linear-gradient(#fff, #ececec)')};
`;

const DockButton = styled.button`
  display: flex;
  flex-direction: column;
  padding: 2px 0 0 4px;
  border: 0;
  background: none;
  line-height: 6px;
`;

const DockClose = styled.button`
  display: flex;
  width: 9px;
  height: 14px;
  margin-right: 2px;
  padding: 3px 0 0;
  border: 0;
  background: none;
`;

const DockMenu = styled.button`
  display: flex;
  align-items: center;
  justify-content: space-between;
  height: 18px;
  margin-top: auto;
  padding: 0 4px 0 7px;
  border: 0;
  border-top: 1px solid #ccc;
  background: linear-gradient(#fff, #eee);
`;

const Badge = styled.span`
  display: flex;
  justify-content: center;
  align-items: center;
  width: 13px;
  height: 13px;
  border-radius: 50%;
  background: #156fa9;
  color: #fff;
  font-family: 'Liberation Sans', sans-serif;
  font-size: 6px;
  font-weight: bold;
  line-height: 1;
`;

const dock = [
  ['Geometry', 'parts'],
  ['Schematics', 'schematic'],
  ['Simulations', 'simulation'],
  ['Results', 'results'],
  ['Parameters', 'fx'],
  ['Scripting', 'script'],
  ['Libraries', 'folders'],
];

const WindowDock = () => (
  <Dock>
    {dock.map(([text, icon]) => (
      <DockItem key={text} $active={text === 'Schematics'}>
        <DockButton>
          {icon === 'fx' ? <Badge>f(x)</Badge> : <Icon name={icon} size={13} />}
          {text}
        </DockButton>
        <DockClose aria-label={`Close ${text}`}>
          <Svg viewBox="0 0 8 8" $size={8}>
            <circle cx="4" cy="4" r="3.3" fill="#eee" stroke="#666" />
            <path d="M2.6 2.6l2.8 2.8M5.4 2.6L2.6 5.4" stroke="#444" strokeWidth="1.1" />
          </Svg>
        </DockClose>
      </DockItem>
    ))}
    <DockMenu aria-label="Window list">
      <Icon name="windows" size={13} />
      <Svg viewBox="0 0 6 6" $size={6}>
        <path d="M0 1h6L3 5z" fill="#111" />
      </Svg>
    </DockMenu>
  </Dock>
);

const App = () => (
  <Page>
    <GlobalStyle />
    <TitleBar>
      <Icon name="app" size={8} />
      <AppTitle>WiFIArray* - XFdtd 7.11.2.0 (64-bit)</AppTitle>
      <Caption aria-label="Minimize">
        <Svg viewBox="0 0 8 8" $size={7}>
          <path d="M1 4h6" stroke="#111" />
        </Svg>
      </Caption>
      <Caption aria-label="Restore">
        <Svg viewBox="0 0 8 8" $size={7}>
          <path d="M1.5 3h4v4h-4zM3 3V1.5h4v4H5.5" stroke="#111" />
        </Svg>
      </Caption>
      <Caption aria-label="Close">
        <Svg viewBox="0 0 8 8" $size={7}>
          <path d="M1 1l6 6M7 1L1 7" stroke="#111" />
        </Svg>
      </Caption>
    </TitleBar>
    <Body>
      <ProjectTree />
      <SchematicWindow />
      <WindowDock />
    </Body>
    <StatusBar>Idle</StatusBar>
  </Page>
);

export default App;
